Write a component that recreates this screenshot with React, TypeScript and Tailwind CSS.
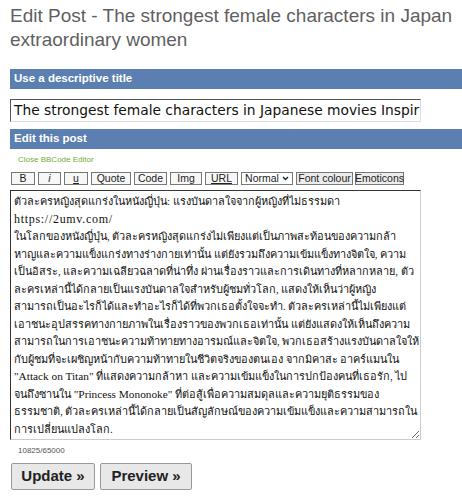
// Latin runs are wrapped in [] (URL) or {} (quoted titles) so they can get their own size
const postLines = [
  "ตัวละครหญิงสุดแกร่งในหนังญี่ปุ่น: แรงบันดาลใจจากผู้หญิงที่ไม่ธรรมดา",
  "[https://2umv.com/]",
  "ในโลกของหนังญี่ปุ่น, ตัวละครหญิงสุดแกร่งไม่เพียงแต่เป็นภาพสะท้อนของความกล้า",
  "หาญและความแข็งแกร่งทางร่างกายเท่านั้น แต่ยังรวมถึงความเข้มแข็งทางจิตใจ, ความ",
  "เป็นอิสระ, และความเฉลียวฉลาดที่น่าทึ่ง ผ่านเรื่องราวและการเดินทางที่หลากหลาย, ตัว",
  "ละครเหล่านี้ได้กลายเป็นแรงบันดาลใจสำหรับผู้ชมทั่วโลก, แสดงให้เห็นว่าผู้หญิง",
  "สามารถเป็นอะไรก็ได้และทำอะไรก็ได้ที่พวกเธอตั้งใจจะทำ. ตัวละครเหล่านี้ไม่เพียงแต่",
  "เอาชนะอุปสรรคทางกายภาพในเรื่องราวของพวกเธอเท่านั้น แต่ยังแสดงให้เห็นถึงความ",
  "สามารถในการเอาชนะความท้าทายทางอารมณ์และจิตใจ, พวกเธอสร้างแรงบันดาลใจให้",
  "กับผู้ชมที่จะเผชิญหน้ากับความท้าทายในชีวิตจริงของตนเอง จากมิคาสะ อาคร์แมนใน",
  "{\"Attack on Titan\"} ที่แสดงความกล้าหา และความเข้มแข็งในการปกป้องคนที่เธอรัก, ไป",
  "จนถึงซานใน {\"Princess Mononoke\"} ที่ต่อสู้เพื่อความสมดุลและความยุติธรรมของ",
  "ธรรมชาติ, ตัวละครเหล่านี้ได้กลายเป็นสัญลักษณ์ของความเข้มแข็งและความสามารถใน",
  "การเปลี่ยนแปลงโลก.",
]

function PostLine({ text }: { text: string }) {
  const parts = text.split(/(\[[^\]]+\]|\{[^}]+\})/)
  return (
    <div className="h-[17.5px] whitespace-nowrap">
      {parts.map((p, i) => {
        if (p.startsWith("["))
          return (
            <span key={i} className="text-[12px] tracking-[0.7px]">
              {p.slice(1, -1)}
            </span>
          )
        if (p.startsWith("{"))
          return (
            <span key={i} className="text-[11.3px]">
              {p.slice(1, -1)}
            </span>
          )
        return <span key={i}>{p}</span>
      })}
    </div>
  )
}

const tools = [
  { label: "B", w: "w-[24px]" },
  { label: "i", w: "w-[23px]", cls: "italic" },
  { label: "u", w: "w-[24px]", cls: "underline" },
  { label: "Quote", w: "w-[40px]" },
  { label: "Code", w: "w-[33px]" },
  { label: "Img", w: "w-[32px]" },
  { label: "URL", w: "w-[33px]", cls: "underline" },
]

function SectionBar({ children }: { children: React.ReactNode }) {
  return (
    <div className="ml-[10px] flex h-[20px] items-center bg-[#5b7fb0] pl-[4px] text-[11.5px] font-bold text-white">
      {children}
    </div>
  )
}

export default function App() {
  return (
    <div className="min-h-[500px] w-[462px] overflow-hidden bg-white font-['Liberation_Sans',sans-serif]">
      <h1 className="whitespace-nowrap pl-[10px] pt-[4px] text-[19px] leading-[24px] text-[#5f5f5f]">
        Edit Post - The strongest female characters in Japan
        <br />
        extraordinary women
      </h1>

      <div className="mt-[17px]">
        <SectionBar>Use a descriptive title</SectionBar>
      </div>

      <div className="ml-[10px] mt-[10px] flex h-[23px] w-[411px] items-center overflow-hidden whitespace-nowrap border border-b-[#ddd] border-l-[#555] border-r-[#ddd] border-t-[#555] bg-white pl-[3px] font-['DejaVu_Sans',sans-serif] text-[13.8px] text-[#111]">
        The strongest female characters in Japanese movies Inspir
      </div>

      <div className="mt-[7px]">
        <SectionBar>Edit this post</SectionBar>
      </div>

      <div className="ml-[18px] mt-[6px] text-[8px] leading-[10px] text-[#6fae3a]">Close BBCode Editor</div>

      <div className="ml-[11px] mt-[7px] flex h-[13px] items-stretch gap-[3px] whitespace-nowrap text-[10.5px] leading-none text-[#222]">
        {tools.map((t) => (
          <div
            key={t.label}
            className={`flex items-center justify-center border border-[#777] bg-[#f7f7f7] ${t.w} ${t.cls ?? ""}`}
          >
            {t.label}
          </div>
        ))}
        <div className="flex w-[52px] items-center justify-center gap-[3px] border border-[#777] bg-white">
          Normal
          <svg width="7" height="5" viewBox="0 0 7 5">
            <path d="M1 1 L3.5 3.5 L6 1" stroke="#222" strokeWidth="1.4" fill="none" />
          </svg>
        </div>
        <div className="flex w-[57px] items-center justify-center border border-[#777] bg-[#ececec]">
          Font colour
        </div>
        <div className="-ml-[1px] flex w-[49px] items-center justify-center border border-[#777] bg-[#ececec]">
          Emoticons
        </div>
      </div>

      <div className="ml-[10px] mt-[5px] h-[250px] w-[411px] resize overflow-hidden border border-b-[#ccc] border-l-[#333] border-r-[#ccc] border-t-[#333] px-[3px] py-[2px] font-['Liberation_Serif',serif] text-[10.9px] leading-[17.5px] text-[#111]">
        {postLines.map((l, i) => (
          <PostLine key={i} text={l} />
        ))}
      </div>

      <div className="ml-[18px] mt-[5px] text-[8px] leading-[11px] text-[#555]">10825/65000</div>

      <div className="ml-[11px] mt-[7px] flex gap-[5px]">
        <button className="h-[27px] w-[84px] rounded-[2px] border border-[#999] bg-[#e8e8e8] text-[15px] font-bold text-[#222]">
          Update »
        </button>
        <button className="h-[27px] w-[92px] rounded-[2px] border border-[#999] bg-[#e8e8e8] text-[15px] font-bold text-[#222]">
          Preview »
        </button>
      </div>
    </div>
  )
}
